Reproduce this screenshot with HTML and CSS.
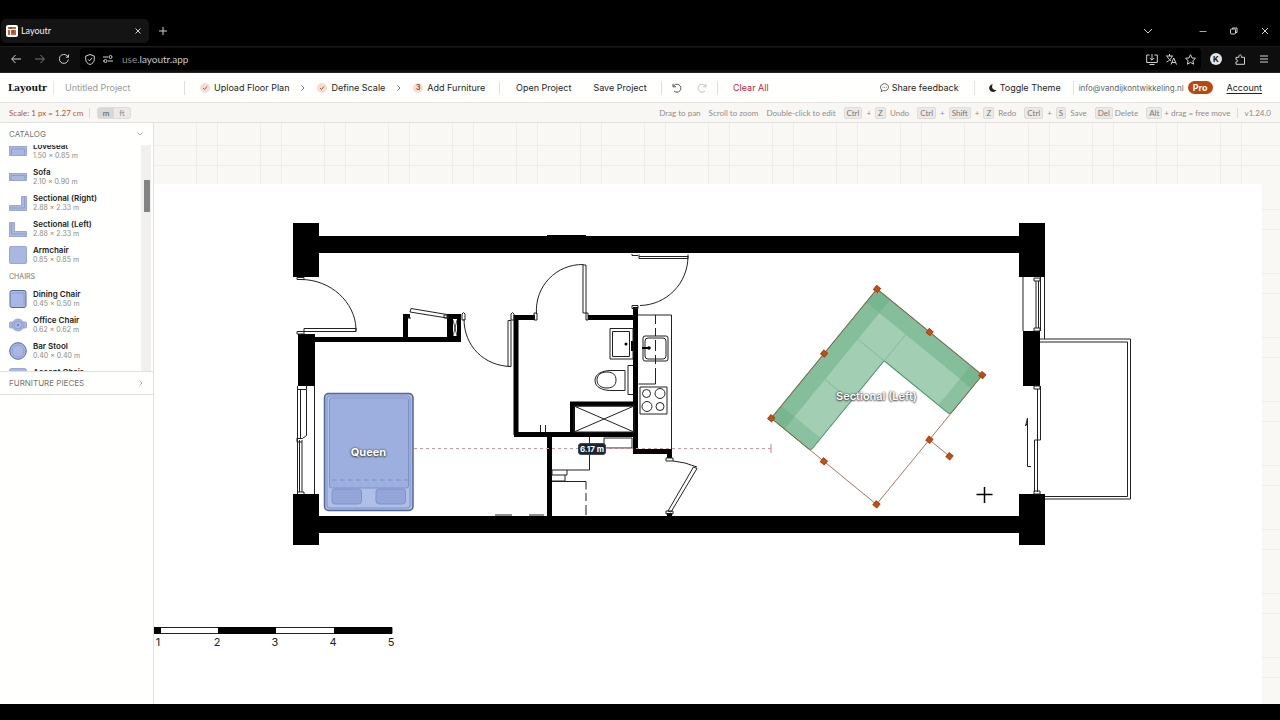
FILE: index.html
```html
<!DOCTYPE html>
<html lang="en">
<head>
<meta charset="utf-8">
<title>Layoutr</title>
<link rel="stylesheet" href="styles.css">
</head>
<body>
<div class="window">
  <div class="tabstrip">
    <div class="tab">
      <svg class="favicon" viewBox="0 0 12 12"><rect width="12" height="12" rx="2" fill="#fff"/><path d="M2 2h8v2H2zM2 5h2v5H2zM5 5h5v5H5z" fill="#bd6543"/><path d="M5 2v2M7 5v3" stroke="#70321c"/></svg>
      <span class="tab-title">Layoutr</span>
      <button class="chrome-btn" aria-label="Close tab"><svg width="6" height="6" viewBox="0 0 6 6"><path d="M.5.5l5 5m0-5l-5 5"/></svg></button>
    </div>
    <button class="chrome-btn new-tab" aria-label="New tab"><svg width="8" height="8" viewBox="0 0 8 8"><path d="M4 0v8M0 4h8"/></svg></button>
    <div class="window-controls">
      <button class="chrome-btn list-tabs" aria-label="List tabs"><svg width="8" height="6" viewBox="0 0 8 6"><path d="M0 1l4 4 4-4"/></svg></button>
      <button class="chrome-btn" aria-label="Minimize"><svg width="8" height="8" viewBox="0 0 8 8"><path d="M.5 4.500h7" stroke="#aaa"/></svg></button>
      <button class="chrome-btn" aria-label="Restore"><svg width="8" height="8" viewBox="0 0 8 8"><rect x=".5" y="2" width="5" height="5" rx="1"/><path d="M2.500 2V1h4.500v4.500H6"/></svg></button>
      <button class="chrome-btn" aria-label="Close window"><svg width="8" height="8" viewBox="0 0 8 8"><path d="M1 1l6 6m0-6l-6 6"/></svg></button>
    </div>
  </div>
  <div class="navbar">
    <button class="chrome-btn" aria-label="Back"><svg width="10" height="10" viewBox="0 0 10 10"><path d="M10 5H.8M4.500 1L.7 5l3.800 4"/></svg></button>
    <button class="chrome-btn dim" aria-label="Forward"><svg width="10" height="10" viewBox="0 0 10 10"><path d="M0 5h9.200M5.500 1l3.800 4-3.800 4"/></svg></button>
    <button class="chrome-btn" aria-label="Reload"><svg width="10" height="10" viewBox="0 0 10 10"><path d="M9.300 5.500A4.500 4.500 0 1 1 8 1.700L9.500 3M9.500.5V3.200H6.800"/></svg></button>
    <div class="address">
      <svg class="line-icon" width="10" height="11" viewBox="0 0 10 11"><path d="M5 .5l4.300 1.600v3.200C9.300 8 7.300 9.800 5 10.500 2.700 9.800.7 8 .7 5.300V2.100zM3 5.300l1.500 1.500 2.700-3"/></svg>
      <svg class="line-icon" width="10" height="8" viewBox="0 0 10 8"><path d="M0 2h5M5 6h5M0 6h1"/><circle cx="7.500" cy="2" r="1.500"/><circle cx="2.500" cy="6" r="1.500"/></svg>
      <span class="url">use.<b>layoutr.app</b></span>
      <svg class="line-icon push" width="12" height="11" viewBox="0 0 12 11"><path d="M3.500 1H.7v7.500h10.600V1H8.500M3.500 10.500h5M6 0v6M3.800 4L6 6.200 8.200 4"/></svg>
      <svg class="line-icon" width="11" height="11" viewBox="0 0 11 11"><path d="M0 2h7M3.500 0v2M6 2C5.500 4.500 3 7 .5 8M1.500 2.500C2 5 3.500 6 5 6.500M5 10.500l2.800-6.500 2.700 6.500M6 8.500h3.500"/></svg>
      <svg class="line-icon" width="11" height="11" viewBox="0 0 11 11"><path d="M5.500.7L7 3.900l3.500.4-2.600 2.400.7 3.500-3.100-1.800-3.100 1.800.7-3.500L.5 4.300 4 3.900z"/></svg>
    </div>
    <button class="chrome-btn profile" aria-label="Profile">K</button>
    <button class="chrome-btn" aria-label="Extensions"><svg width="11" height="11" viewBox="0 0 11 11"><path d="M1 10.300V7.800c2.300.5 2.300-2.600 0-2V3.300h3c-.7-3.300 3-3.300 2.400 0h3.100v7z"/></svg></button>
    <button class="chrome-btn" aria-label="Menu"><svg width="8" height="8" viewBox="0 0 8 8"><path d="M0 1h8M0 4h8M0 7h8"/></svg></button>
  </div>

  <header class="toolbar">
    <div class="brand">Layoutr</div>
    <input class="project-name" aria-label="Project name" value="Untitled Project">
    <nav class="steps">
      <button class="step"><span class="badge"><svg width="6" height="6" viewBox="0 0 6 6"><path d="M1 3l1.500 1.500L5 1.500"/></svg></span>Upload Floor Plan</button>
      <svg class="chev" viewBox="0 0 4 6"><path d="M.5.5L3 3 .5 5.500"/></svg>
      <button class="step"><span class="badge"><svg width="6" height="6" viewBox="0 0 6 6"><path d="M1 3l1.500 1.500L5 1.500"/></svg></span>Define Scale</button>
      <svg class="chev" viewBox="0 0 4 6"><path d="M.5.5L3 3 .5 5.500"/></svg>
      <button class="step"><span class="badge">3</span>Add Furniture</button>
    </nav>
    <div class="group files"><button>Open Project</button><button>Save Project</button></div>
    <div class="group history">
      <button aria-label="Undo"><svg width="10" height="10" viewBox="0 0 10 10"><path d="M1 .8v3h3M1.200 3.600A4 4 0 1 1 2 8"/></svg></button>
      <button class="off" aria-label="Redo"><svg width="10" height="10" viewBox="0 0 10 10"><path d="M9 .8v3H6M8.800 3.600A4 4 0 1 0 8 8"/></svg></button>
    </div>
    <div class="group"><button class="danger">Clear All</button></div>
    <div class="account-area">
      <button class="share"><svg width="9" height="9" viewBox="0 0 9 9"><path d="M1.700 7L1 8.500l2.300-.9C6.300 8.300 8.500 6.500 8.500 4.300S6.700.7 4.500.7.5 2.300.5 4.300c0 1 .4 2 1.200 2.700zM2.500 4.300h.8M4.200 4.300H5M6 4.300h.8"/></svg>Share feedback</button>
      <button class="theme"><svg width="8" height="8" viewBox="0 0 8 8"><path d="M3.800.2A3.900 3.900 0 1 0 7.500 6C4.200 6.800 1.800 3.300 3.800.2z" fill="#222" stroke="none"/></svg>Toggle Theme</button>
      <span class="email">info@vandijkontwikkeling.nl</span><span class="pro">Pro</span>
      <a class="account" href="#">Account</a>
    </div>
  </header>

  <div class="infobar">
    <span class="scale">Scale: 1 px = 1.27 cm</span>
    <div class="units"><button class="on">m</button><button>ft</button></div>
    <div class="hints">
      <span>Drag to pan</span><span>Scroll to zoom</span><span>Double-click to edit</span>
      <span class="keys"><kbd>Ctrl</kbd>+<kbd>Z</kbd>Undo</span>
      <span class="keys"><kbd>Ctrl</kbd>+<kbd>Shift</kbd>+<kbd>Z</kbd>Redo</span>
      <span class="keys"><kbd>Ctrl</kbd>+<kbd>S</kbd>Save</span>
      <span class="keys tight"><kbd>Del</kbd>Delete</span>
      <span class="keys tight"><kbd>Alt</kbd>+ drag = free move</span>
      <span class="version">v1.24.0</span>
    </div>
  </div>

  <main class="workspace">
    <aside class="sidebar">
      <button class="section-head">CATALOG<svg width="6" height="4" viewBox="0 0 6 4"><path d="M.5.5L3 3 5.500.5"/></svg></button>
      <div class="catalog">
        <ul class="items">
          <li><svg viewBox="0 0 18 18"><rect x=".5" y="4.500" width="17" height="9"/><path class="line" d="M2.500 13V7h13v6"/></svg><div><b>Loveseat</b><small>1.50 × 0.85 m</small></div></li>
          <li><svg viewBox="0 0 18 18"><rect x=".5" y="5.500" width="17" height="7"/><path class="line" d="M2 12V7.500h14V12"/></svg><div><b>Sofa</b><small>2.10 × 0.90 m</small></div></li>
          <li><svg viewBox="0 0 18 18"><path d="M12.500 2.500h5v14H.5v-5h12z"/><path class="line" d="M15.500 3v11H1"/></svg><div><b>Sectional (Right)</b><small>2.88 × 2.33 m</small></div></li>
          <li><svg viewBox="0 0 18 18"><path d="M.5 2.500h5v9h12v5H.5z"/><path class="line" d="M2.500 3v11H17"/></svg><div><b>Sectional (Left)</b><small>2.88 × 2.33 m</small></div></li>
          <li><svg viewBox="0 0 18 18"><rect x=".5" y=".5" width="17" height="17" rx="1"/></svg><div><b>Armchair</b><small>0.85 × 0.85 m</small></div></li>
          <li class="category">CHAIRS</li>
          <li><svg viewBox="0 0 18 18"><rect class="dark" x="1" y=".5" width="16" height="17" rx="2"/><path class="line" d="M3 3h12v12"/></svg><div><b>Dining Chair</b><small>0.45 × 0.50 m</small></div></li>
          <li><svg viewBox="0 0 18 18"><rect x=".5" y="6" width="4" height="6" rx="1"/><rect x="13.500" y="6" width="4" height="6" rx="1"/><circle cx="9" cy="9" r="6"/><circle cx="9" cy="9" r="4"/><circle class="dark" cx="9" cy="9" r=".5"/></svg><div><b>Office Chair</b><small>0.62 × 0.62 m</small></div></li>
          <li><svg viewBox="0 0 18 18"><circle class="dark" cx="9" cy="9" r="8.300"/><circle cx="9" cy="9" r="6"/></svg><div><b>Bar Stool</b><small>0.40 × 0.40 m</small></div></li>
          <li><svg viewBox="0 0 18 18"><rect x=".5" y=".5" width="17" height="17" rx="2"/><path class="line" d="M3 5h12"/></svg><div><b>Accent Chair</b></div></li>
        </ul>
        <div class="scrollbar"><div class="thumb"></div></div>
      </div>
      <button class="section-head pieces">FURNITURE PIECES<svg width="4" height="6" viewBox="0 0 4 6"><path d="M.5.5L3 3 .5 5.500"/></svg></button>
    </aside>

    <div class="canvas">
      <svg class="plan" viewBox="154 123 1126 581" preserveAspectRatio="xMinYMin slice">
        <defs>
          <pattern id="grid" x="1028" y="145" width="64" height="64" patternUnits="userSpaceOnUse">
            <path d="M.5 0v64M21.500 0v64M0 .5h64M0 20.500h64" stroke="#efedea"/>
          </pattern>
        </defs>
        <rect x="154" y="123" width="1126" height="581" fill="#f9f8f5"/>
        <rect x="154" y="123" width="1126" height="581" fill="url(#grid)"/>
        <rect x="154" y="184" width="1108" height="520" fill="#fff"/>

        <!-- structural walls -->
        <path d="M293 223h26v13h228v-1h39v1h433v-13h26v54h-26v-24H319v24h-26zM293 494h26v22h700v-22h26v51h-26v-12H319v12h-26zM298 334h17v52h-17zM1023 331h17v55h-17z" fill="#000"/>
        <!-- partitions -->
        <g fill="none" stroke="#000" stroke-width="5">
          <path d="M314 339.500h147M405.500 341v-27M514 317.500h21M588 317.500h47M516 315v120M514 434.500h123M549.500 434v83M572.500 435v-31h64" stroke-linejoin="miter"/>
          <path d="M635.500 307v145M633 451.500h38M669.500 449v9M669.500 513v4"/>
        </g>
        <path d="M403 314h7v4h-7zM447 314h14v27h-14z"/>
        <path d="M453 319h4v17h-4z" fill="#fff"/><path d="M453 320l4 16m0-16l-4 16" stroke="#000" stroke-width=".7"/>

        <g class="thin">
          <!-- entrance and hall doors -->
          <path d="M297 277.500h7v2h-7zM297 331.500h7v2.500h-7zM304 328.500h52v3h-52zM301 279.500c30 0 54 23 55 49M356 328v3"/>
          <path d="M410 312l1-3.500 36 6v3.500zM408 314v4h3M444 315h4v3h-4z"/>
          <path d="M462 320v-6q1.500-3 3 0v6zM464 319c0 27 20 47 47 47.500M508 320.500h3v46h-3zM511 320v-6q1.500-3 3 0v6z"/>
          <path d="M536.500 314c-2-28 20-50 47-49.500M583 265h3v48h-3zM534 313h3v7h-3zM586 313h2v7h-2z"/>
          <path d="M639 254.500v4h49v-4M639 256.500h49M688 256c0 28-22 49-48 49.500M632 254v1.500h6M632 305.500h6v3h-6z"/>
          <path d="M666 458h7v3h-7zM666 511h7v3h-7zM673 461q12 1 24 6M693.500 467l3.500 1.500-26 43.500-3-1z"/>
          <!-- windows, left facade -->
          <path d="M314.500 386v108M297.500 386v108M306.500 385.500v4h-9v49h5l4-3V389.500M300.500 390v48M299.500 440v52M302 440v52M297 438v4h5M297 492h7v2"/>
          <!-- windows, right facade -->
          <path d="M1023 277v54M1044.500 277v62M1034 278h6v3h-6zM1034 328h6v3h-6zM1036 281v47M1038.500 281v47M1040.500 277v54M1034 386h6v3h-6zM1037.500 389v52M1040.500 386v54h-6v52M1037.500 440v52M1034 491h6v3h-6z"/>
          <!-- balcony -->
          <path d="M1040 339h90.500v160H1045M1040 342h87.500v154.500H1045"/>
          <path d="M1031 466.500h-3.500V418l-2 8 2-3"/>
          <!-- bathroom -->
          <path d="M610 328.500h23v30.500h-23zM612.500 331.500h17v25h-17zM633 365.500h-5v29h5M625 370.500h-14c-8 0-16 3-16 10s8 10 16 10h14zM607 372c-6 0-10 3-10 8s4 8 10 8 9-3 9-8-3-8-9-8"/>
          <path d="M574 406h60v26h-60zM574 406l60 26m0-26l-60 26M540.500 425v7M545.500 425v7"/>
          <!-- kitchen -->
          <path d="M638 315h33.500v134M655.500 315v9M655.500 328v8M655.500 340v11M655.500 355v9M655.500 368v16h-17"/>
          <rect x="643" y="336" width="25" height="25" rx="2"/><rect x="645" y="338" width="21" height="21" rx="3"/>
          <path d="M640 387h27v27h-27z"/><circle cx="646.500" cy="393.500" r="4"/><circle cx="660" cy="393.500" r="5"/><circle cx="647" cy="406.500" r="5"/><circle cx="660" cy="406.500" r="4"/>
          <!-- storage -->
          <path d="M589.500 437v33H552v5h15v-5M565 475v6H552M552 481.500h34v8M586 493v8M586 505v10M604 438h28v10h-28zM495 515h17M529 515h15"/>
        </g>
        <path d="M631 341h2v10h-2zM642 347h8v2h-8z"/><circle cx="626" cy="344" r="1.500"/><circle cx="649" cy="348" r="1.800"/>

        <!-- distance measurement -->
        <path d="M414 448.500h357" stroke="#cf9a9a" stroke-dasharray="3 3"/>
        <path d="M771 444v9" stroke="#b88"/>
        <rect x="578.500" y="443.500" width="27" height="11" rx="2.500" fill="#192532" stroke="#445"/>
        <text x="592" y="452" class="measure">6.17 m</text>

        <!-- bed -->
        <g stroke="#8093c8">
          <rect x="324.500" y="393.500" width="88.500" height="117" rx="4" fill="#a9b9e4" stroke="#53659d" stroke-width="1.500"/>
          <rect x="327" y="396" width="83" height="112" rx="3" fill="#afbfe7"/>
          <rect x="329.500" y="398" width="79" height="90" rx="2" fill="#9dafdf"/>
          <path d="M332 480h76" stroke-dasharray="5 3"/>
          <rect x="332" y="489" width="29.500" height="15" rx="3" fill="#94a6d9"/><rect x="376" y="489" width="29.500" height="15" rx="3" fill="#94a6d9"/>
        </g>
        <text x="368.500" y="456" class="label">Queen</text>

        <!-- selected sectional -->
        <g transform="translate(877 289) rotate(39.3)">
          <path d="M0 0h136v48q0 3-3 3H51v113q0 3-3 3H0z" fill="#a2cfb3" stroke="#4a9268"/>
          <g fill="#5fa87c" fill-opacity=".45"><path d="M0 0h136v17H17v150H0z"/></g>
          <g fill="#5fa87c" fill-opacity=".35"><path d="M0 0h17v17H0zM0 151h51v13q0 3-3 3H0zM121 0h15v51h-15z"/></g>
          <path d="M17 51h34M51 17v34M17 103h34" stroke="#88bd9b" fill="none"/>
          <path d="M0 0h136v167H0zM136 83.500h26" fill="none" stroke="#9b6048" stroke-width=".8"/>
          <g fill="#c84d10" stroke="#a8430f">
            <path d="M-2.500-2.500h5v5h-5zM65.500-2.500h5v5h-5zM133.500-2.500h5v5h-5zM-2.500 81h5v5h-5zM133.500 81h5v5h-5zM159.500 81h5v5h-5zM-2.500 164.500h5v5h-5zM65.500 164.500h5v5h-5zM133.500 164.500h5v5h-5z"/>
          </g>
        </g>
        <text x="876.500" y="400" class="label small">Sectional (Left)</text>

        <path d="M984.500 487v16M976.500 494.500h16" stroke="#000" stroke-width="1.500"/>

        <!-- scale ruler -->
        <path d="M154 627.500h238v6H154z" fill="#fff" stroke="#222"/>
        <path d="M154 627h7v7h-7zM218 627h58v7h-58zM334 627h58v7h-58z"/>
        <g class="ruler"><text x="158" y="646">1</text><text x="217" y="646">2</text><text x="275" y="646">3</text><text x="333" y="646">4</text><text x="391" y="646">5</text></g>
      </svg>
    </div>
  </main>
  <div class="taskbar"></div>
</div>
</body>
</html>
```
FILE: styles.css
```css
* { box-sizing: border-box; }
body { margin: 0; font-family: Inter, "Open Sans", sans-serif; font-size: 9px; line-height: 12px; color: #242424; }
button, input { font: inherit; color: inherit; border: 0; padding: 0; margin: 0; background: none; white-space: nowrap; }
svg { display: block; flex: none; }
.window { display: flex; flex-direction: column; height: 100vh; min-width: 1200px; background: #000; }

/* Browser chrome */
.tabstrip { flex: none; height: 46px; display: flex; align-items: center; padding: 16px 9px 0 1px; }
.tab { width: 148px; height: 24px; display: flex; align-items: center; gap: 3px; padding: 0 5px; border-radius: 5px; background: #141414; color: #eee; }
.favicon { width: 12px; height: 12px; }
.tab-title { flex: 1; font-family: Lato, sans-serif; }
.chrome-btn { width: 12px; height: 12px; display: flex; flex: none; align-items: center; justify-content: center; color: #ddd; }
.chrome-btn svg, .line-icon { fill: none; stroke: #d2d2d2; stroke-width: 1; }
.new-tab { margin-left: 8px; }
.window-controls { margin-left: auto; display: flex; gap: 19px; }
.list-tabs { margin-right: 24px; }
.navbar { flex: none; height: 27px; display: flex; align-items: center; gap: 12px; padding: 0 10px 1px; background: #0e0e0e; border-top: 1px solid #191919; border-bottom: 1px solid #252525; }
.dim { opacity: .55; }
.address { flex: 1; height: 22px; display: flex; align-items: center; gap: 8px; margin-left: -2px; padding: 0 5px; border-radius: 4px; background: #000; }
.url { font-family: Lato, sans-serif; font-size: 10px; color: #8d8d8d; margin-left: 1px; }
.url b { font-weight: 400; color: #c7c7c7; }
.push { margin-left: auto; }
.profile { border-radius: 50%; background: #e4e4e4; color: #111; font-size: 8px; font-weight: 700; }
.navbar .profile { margin-left: -3px; }

/* App toolbar */
.toolbar { flex: none; height: 30px; display: flex; align-items: center; background: #fffffd; border-bottom: 1px solid #e4e3df; }
.brand { width: 54px; padding-left: 8px; border-right: 1px solid #e6e5e1; font: 700 9px/14px "DejaVu Serif", serif; color: #111; white-space: nowrap; }
.project-name { width: 131px; height: 14px; padding-left: 11px; border-right: 1px solid #e0dfdb; color: #9b9996; }
.steps { display: flex; align-items: center; gap: 12px; width: 315px; padding-left: 15px; border-right: 1px solid #e0dfdb; }
.step { display: flex; align-items: center; gap: 4px; }
.badge { width: 10px; height: 10px; display: flex; align-items: center; justify-content: center; border-radius: 50%; background: #f6ddd2; color: #a8502c; font-size: 7px; font-weight: 700; line-height: 10px; }
.badge svg { fill: none; stroke: #b7562f; }
.chev { width: 4px; height: 6px; fill: none; stroke: #777; }
.group { display: flex; align-items: center; height: 14px; padding-left: 15px; }
.files { gap: 22px; width: 162px; border-right: 1px solid #e0dfdb; padding-left: 16px; }
.history { gap: 15px; width: 56px; border-right: 1px solid #e0dfdb; padding-left: 10px; }
.history svg { fill: none; stroke: #555; stroke-width: 1; }
.off { opacity: .35; }
.danger { color: #bd2442; }
.account-area { margin-left: auto; display: flex; align-items: center; padding-right: 18px; }
.share, .theme { display: flex; align-items: center; gap: 3px; height: 14px; border-right: 1px solid #e4e3df; }
.share { padding-right: 15px; }
.share svg { fill: none; stroke: #444; stroke-width: .8; }
.theme { padding: 0 12px 0 14px; }
.email { padding: 0 4px 0 5px; font-size: 8px; color: #666; }
.pro { padding: 0 5px; line-height: 13px; border-radius: 7px; background: #b9480d; color: #fff; font-weight: 700; }
.account { margin-left: 14px; color: #222; text-underline-offset: 2px; }

/* Scale and shortcut bar */
.infobar { flex: none; height: 20px; display: flex; align-items: center; padding: 0 9px; background: #f8f7f4; border-bottom: 1px solid #e2e1dd; font-family: Lato, sans-serif; font-size: 8px; line-height: 10px; color: #8f8e8b; white-space: nowrap; }
.scale { width: 81px; border-right: 1px solid #dddbd7; color: #b1583b; }
.units { display: flex; margin-left: 7px; border: 1px solid #dddcda; border-radius: 3px; background: #ebeae8; }
.units button { width: 16px; height: 10px; }
.units .on { background: #d9d8d6; color: #555; }
.hints { margin-left: auto; display: flex; align-items: center; gap: 8px; }
.keys { display: flex; align-items: center; gap: 4px; }
.tight { gap: 2px; }
kbd { padding: 0 2px; border: 1px solid #dddcd8; border-radius: 2px; background: #ebeae7; color: #777; font: inherit; }
.version { padding-left: 7px; border-left: 1px solid #dddbd7; margin-left: -2px; }

/* Workspace */
.workspace { flex: 1; min-height: 0; display: flex; }
.sidebar { flex: none; width: 154px; background: #fffffd; border-right: 1px solid #e2e1dd; }
.section-head { width: 100%; height: 22px; display: flex; align-items: center; justify-content: space-between; padding: 0 10px 0 9px; font-size: 8px; color: #777570; }
.section-head svg { fill: none; stroke: #aaa; }
.pieces { height: 24px; border-top: 1px solid #e2e1dd; border-bottom: 1px solid #e2e1dd; }
.catalog { display: flex; height: 226px; overflow: hidden; padding-right: 2px; }
.items { flex: 1; margin: -7px 0 0; padding: 0; list-style: none; }
.items li { height: 26px; display: flex; align-items: center; gap: 6px; padding: 0 0 1px 9px; white-space: nowrap; }
.items svg { width: 18px; height: 18px; fill: #a9b8e3; stroke: #8492c5; stroke-width: .7; }
.items .dark { stroke: #5668a5; stroke-width: 1; }
.items .line { fill: none; }
.items b, .items small { display: block; line-height: 9px; }
.items b { font-size: 8px; font-weight: 600; color: #222; }
.items small { font-size: 7px; color: #8b8985; }
.items .category { height: 18px; font-size: 7px; color: #777570; }
.items li:last-child { align-items: flex-start; padding-top: 4px; }
.scrollbar { width: 10px; background: #f1f0ef; padding: 35px 1px 0 3px; }
.thumb { height: 32px; background: #858585; }
.canvas { flex: 1; min-width: 0; background: #f9f8f5; }
.plan { width: 100%; height: 100%; }
.thin { fill: none; stroke: #222; stroke-width: 1; }
.label { font-size: 11px; font-weight: 700; fill: #fff; text-anchor: middle; text-shadow: 0 0 2px #222, 0 1px 2px #555; }
.small { font-weight: 600; }
.measure { font-size: 8px; font-weight: 700; fill: #fff; text-anchor: middle; }
.ruler { font-size: 11px; fill: #222; text-anchor: middle; }
.taskbar { flex: none; height: 16px; background: #000; }
```
